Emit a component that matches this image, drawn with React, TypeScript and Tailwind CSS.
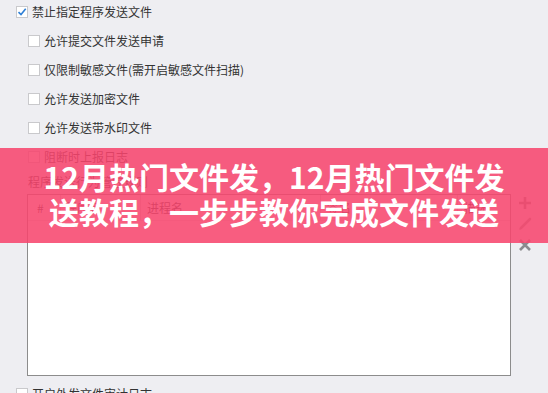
import React from "react";

const FONT = '"Microsoft YaHei", "Noto Sans CJK SC", "Noto Sans", sans-serif';

interface ICheckRow {
  label: string;
  checked?: boolean;
  nested?: boolean;
}

const CheckRow: React.FC<ICheckRow> = ({ label, checked, nested }) => {
  return (
    <div className={`flex items-center h-[24px] ${nested ? "pl-[12px]" : ""}`}>
      <span className="w-[12px] h-[12px] bg-white border border-[#c9c9cc] flex items-center justify-center shrink-0">
        {checked ? (
          <svg width="10" height="10" viewBox="0 0 10 10">
            <path d="M1.5 5.2 L4 7.6 L8.7 1.8" fill="none" stroke="#2f7fd6" strokeWidth="1.6" />
          </svg>
        ) : null}
      </span>
      <span className="ml-[4px] text-[12px] leading-none text-[#333]">{label}</span>
    </div>
  );
};

const App: React.FC = () => {
  return (
    <div
      className="relative w-[548px] h-[393px] overflow-hidden bg-[#eeeef2]"
      style={{ fontFamily: FONT }}
    >
      <div className="px-[16px] flex flex-col gap-[5px]">
        <CheckRow label="禁止指定程序发送文件" checked />
        <CheckRow label="允许提交文件发送申请" nested />
        <CheckRow label="仅限制敏感文件(需开启敏感文件扫描)" nested />
        <CheckRow label="允许发送加密文件" nested />
        <CheckRow label="允许发送带水印文件" nested />
        <CheckRow label="阻断时上报日志" nested />
      </div>

      <div className="px-[16px]">
        <div className="pl-[12px] h-[25px] flex items-center text-[12px] text-[#333]">
          程序发送行为管控规则
        </div>
        <div className="flex ml-[11px]">
          <div className="w-[484px] h-[182px] bg-white border border-[#8c8c8c]">
            <div className="flex h-[26px] items-center text-[12px] text-[#333] border-b border-[#e2e2e2]">
              <div className="w-[33px] pl-[9px] border-r border-[#d8d8d8] h-full flex items-center">#</div>
              <div className="w-[80px] pl-[4px] border-r border-[#d8d8d8] h-full flex items-center">程序名</div>
              <div className="w-[180px] pl-[6px] border-r border-[#d8d8d8] h-full flex items-center">进程名</div>
              <div className="w-[137px] pl-[6px] border-r border-[#d8d8d8] h-full flex items-center">签名</div>
              <div className="flex-1 pl-[6px] h-full flex items-center">描述</div>
            </div>
          </div>
          <div className="ml-[6px] w-[15px] flex flex-col items-center pt-[2px] gap-[7px]">
            <svg width="14" height="14" viewBox="0 0 14 14">
              <path d="M7 1 V13 M1 7 H13" stroke="#8a8a8e" strokeWidth="2.6" />
            </svg>
            <svg width="14" height="14" viewBox="0 0 14 14">
              <path d="M3 11 L12 2" stroke="#9a9a9e" strokeWidth="2.6" strokeLinecap="round" />
              <path d="M1.5 12.5 L3.2 10.8" stroke="#9a9a9e" strokeWidth="1.4" />
            </svg>
            <svg width="14" height="14" viewBox="0 0 14 14">
              <path d="M2 2 L12 12 M12 2 L2 12" stroke="#8a8a8e" strokeWidth="2.6" />
            </svg>
          </div>
        </div>
        <div className="mt-[12px] flex items-center">
          <span className="w-[12px] h-[12px] bg-white border border-[#c9c9cc]" />
          <span className="ml-[4px] text-[12px] leading-none text-[#333]">开启外发文件审计日志</span>
        </div>
      </div>

      <div className="absolute left-0 right-0 top-[148px] h-[95px] bg-[#f7456d]/[0.87] flex flex-col items-center justify-center">
        <div
          className="text-white font-bold text-[30px] leading-[35px] text-center -mt-[3px]"
          style={{ fontFamily: '"Noto Sans CJK SC", sans-serif' }}
        >
          <div>12月热门文件发，12月热门文件发</div>
          <div>送教程，一步步教你完成文件发送</div>
        </div>
      </div>
    </div>
  );
};

export default App;
